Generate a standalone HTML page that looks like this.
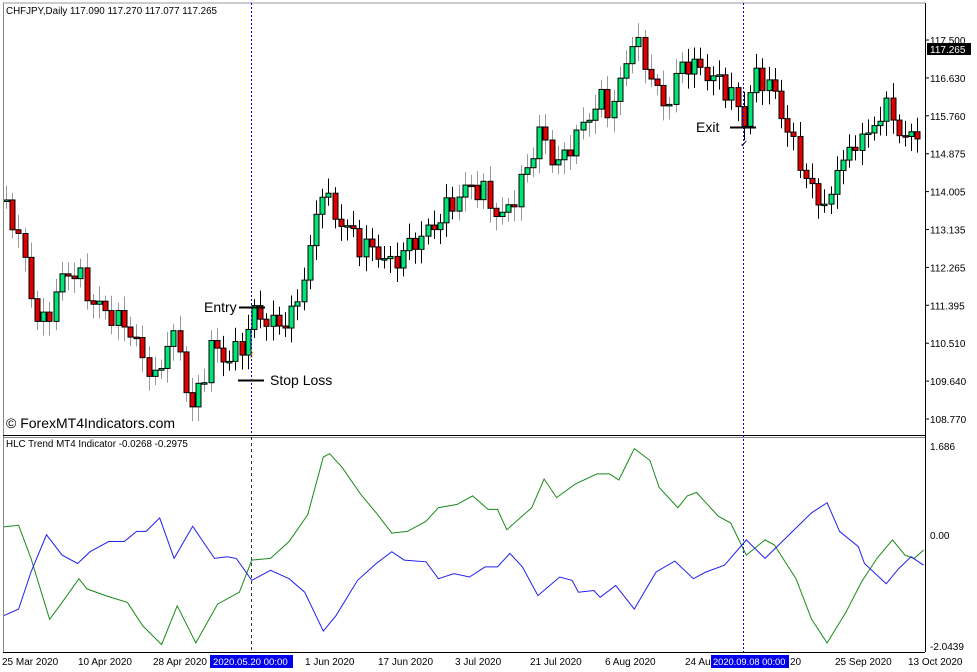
<!DOCTYPE html><html><head><style>
body{margin:0;background:#fff;width:977px;height:672px;overflow:hidden;font-family:"Liberation Sans",sans-serif}
svg{display:block}
</style></head><body>
<svg id="s" width="977" height="672" xmlns="http://www.w3.org/2000/svg" font-family="Liberation Sans, sans-serif">
<rect width="977" height="672" fill="#fff"/>
<g id="candles"></g>
<g id="ind"></g>
<line x1="3" y1="3" x2="925" y2="3" stroke="#999"/>
<line x1="3.5" y1="3" x2="3.5" y2="652" stroke="#888"/>
<line x1="925.5" y1="3" x2="925.5" y2="652" stroke="#000"/>
<line x1="3" y1="435.5" x2="925" y2="435.5" stroke="#000"/>
<line x1="3" y1="437.5" x2="925" y2="437.5" stroke="#888"/>
<line x1="3" y1="652.5" x2="925" y2="652.5" stroke="#000"/>
<line x1="251.5" y1="3" x2="251.5" y2="435" stroke="#0000dd" stroke-dasharray="2,2"/>
<line x1="251.5" y1="437" x2="251.5" y2="652" stroke="#333" stroke-dasharray="3,3"/>
<line x1="743.5" y1="3" x2="743.5" y2="652" stroke="#0000dd" stroke-dasharray="2,2"/>
<text x="6" y="14" font-size="9.8" fill="#000">CHFJPY,Daily  117.090 117.270 117.077 117.265</text>
<text x="6" y="447" font-size="9.8" fill="#000">HLC Trend MT4 Indicator -0.0268 -0.2975</text>
<text x="6" y="428" font-size="14" fill="#000">© ForexMT4Indicators.com</text>
<text x="204" y="312" font-size="14">Entry</text>
<line x1="239" y1="307.5" x2="265" y2="307.5" stroke="#000" stroke-width="2"/>
<text x="270" y="385" font-size="14">Stop Loss</text>
<line x1="238" y1="380.5" x2="264" y2="380.5" stroke="#000" stroke-width="2"/>
<text x="696" y="132" font-size="14">Exit</text>
<line x1="730" y1="127.5" x2="756" y2="127.5" stroke="#000" stroke-width="2"/>
<text x="740" y="147" font-size="10" fill="#003">✓</text>
<text x="247" y="358" font-size="10" fill="#c8a040">⇧</text>
<g font-size="10" fill="#000" id="axis"></g>
<rect x="927" y="43" width="44" height="12" fill="#000"/>
<text x="930" y="53" font-size="10" fill="#fff">117.265</text>
<text x="930" y="450" font-size="10">1.686</text>
<text x="930" y="539" font-size="10">0.00</text>
<text x="930" y="650" font-size="10">-2.0439</text>
<g font-size="10" fill="#000">
<text x="2" y="665">25 Mar 2020</text>
<text x="78" y="665">10 Apr 2020</text>
<text x="153" y="665">28 Apr 2020</text>
<rect x="210" y="655" width="83" height="13" fill="#0000ee"/>
<text x="213" y="665" fill="#fff" font-size="9.6">2020.05.20 00:00</text>
<text x="305" y="665">1 Jun 2020</text>
<text x="378" y="665">17 Jun 2020</text>
<text x="455" y="665">3 Jul 2020</text>
<text x="530" y="665">21 Jul 2020</text>
<text x="605" y="665">6 Aug 2020</text>
<text x="685" y="665">24 Au</text>
<rect x="711" y="655" width="78" height="13" fill="#0000ee"/>
<text x="713" y="665" fill="#fff" font-size="9.3">2020.09.08 00:00</text>
<text x="790" y="665">20</text>
<text x="835" y="665">25 Sep 2020</text>
<text x="908" y="665">13 Oct 2020</text>
</g>
</svg>
<script>
(function(){
var NS="http://www.w3.org/2000/svg";
function el(t,a,p){var e=document.createElementNS(NS,t);for(var k in a)e.setAttribute(k,a[k]);p.appendChild(e);return e;}
var ax=document.getElementById('axis');
var labs=["117.500","116.630","115.760","114.875","114.005","113.135","112.265","111.395","110.510","109.640","108.770"];
for(var i=0;i<labs.length;i++){var yy=40+i*37.9;el('line',{x1:925,y1:yy,x2:929,y2:yy,stroke:'#000'},ax);var t=el('text',{x:930,y:yy+4},ax);t.textContent=labs[i];}
var wp=[[3,200],[10,215],[20,240],[30,290],[40,330],[50,310],[60,280],[75,270],[90,300],[110,315],[130,330],[145,365],[160,380],[168,330],[178,345],[190,410],[200,390],[210,345],[225,360],[240,350],[255,310],[270,325],[290,320],[300,290],[310,250],[322,185],[332,215],[345,225],[360,245],[375,250],[390,265],[410,245],[430,230],[450,205],[470,185],[485,195],[500,220],[510,205],[520,185],[530,160],[540,130],[550,155],[560,165],[570,145],[580,130],[592,110],[600,100],[612,110],[622,75],[632,40],[642,55],[652,80],[662,105],[672,95],[682,60],[692,70],[700,65],[710,80],[720,80],[730,95],[740,110],[745,125],[752,80],[760,75],[768,85],[775,95],[785,125],[795,150],[803,170],[810,190],[820,200],[830,205],[840,150],[850,160],[860,130],[870,140],[880,110],[890,110],[898,130],[905,140],[915,135],[923,110]];
function py(x){for(var i=1;i<wp.length;i++){if(x<=wp[i][0]){var a=wp[i-1],b=wp[i];return a[1]+(b[1]-a[1])*(x-a[0])/(b[0]-a[0]);}}return wp[wp.length-1][1];}
var g=document.getElementById('candles');
var prev=py(3);
for(var x=6;x<922;x+=6.2){
 var c=py(x)+9*Math.sin(x*1.7)+4*Math.sin(x*0.53);
 var o=prev; prev=c;
 var tp=Math.min(o,c),bt=Math.max(o,c);
 var hi=tp-5-10*Math.abs(Math.sin(x*2.3)),lo=bt+5+10*Math.abs(Math.cos(x*1.9));
 var cx=Math.round(x)+0.5;
 el('line',{x1:cx,y1:hi,x2:cx,y2:lo,stroke:(Math.sin(x)>0?'#000':'#999')},g);
 var h=Math.max(bt-tp,1.5);
 el('rect',{x:cx-2.5,y:tp,width:5,height:h,fill:(c<o?'#00e676':'#e00000'),stroke:'#000','stroke-width':1},g);
}
var G=[[0,287],[25,282],[45,380],[75,560],[95,510],[122,440],[135,470],[165,490],[200,510],[225,580],[255,635],[280,520],[310,630],[345,515],[380,480],[400,385],[430,380],[460,330],[490,250],[515,80],[525,70],[545,110],[575,190],[600,245],[625,305],[650,300],[680,270],[700,230],[730,220],[755,195],[780,235],[795,235],[810,295],[850,230],[870,145],[890,200],[920,160],[955,130],[975,130],[990,148],[1015,55],[1040,90],[1055,170],[1085,230],[1100,195],[1115,185],[1130,215],[1150,255],[1170,275],[1195,370],[1225,325],[1240,340],[1275,440],[1300,560],[1325,630],[1355,540],[1380,450],[1405,380],[1430,325],[1450,370],[1465,380],[1480,355]];
var B=[[0,550],[25,530],[45,420],[70,310],[95,370],[120,395],[140,360],[170,330],[195,330],[215,300],[230,300],[252,260],[275,380],[305,285],[340,380],[360,375],[375,380],[400,445],[430,415],[460,440],[485,480],[515,595],[535,550],[570,445],[600,395],[625,360],[645,385],[680,390],[700,440],[725,425],[750,435],[775,405],[795,405],[815,365],[835,405],[860,490],[895,435],[915,445],[925,480],[950,475],[960,495],[985,460],[1015,530],[1050,420],[1080,388],[1110,440],[1130,420],[1160,400],[1195,325],[1225,380],[1275,290],[1300,245],[1325,215],[1345,300],[1375,345],[1385,395],[1420,455],[1440,410],[1460,375],[1480,400]];
function pts(a){return a.map(function(p){return (p[0]*0.622+3).toFixed(1)+','+(430+p[1]*0.338).toFixed(1);}).join(' ');}
var ig=document.getElementById('ind');
el('polyline',{points:pts(G),fill:'none',stroke:'#1a8a1a','stroke-width':1},ig);
el('polyline',{points:pts(B),fill:'none',stroke:'#2020ee','stroke-width':1},ig);
})();
</script>
</body></html>
